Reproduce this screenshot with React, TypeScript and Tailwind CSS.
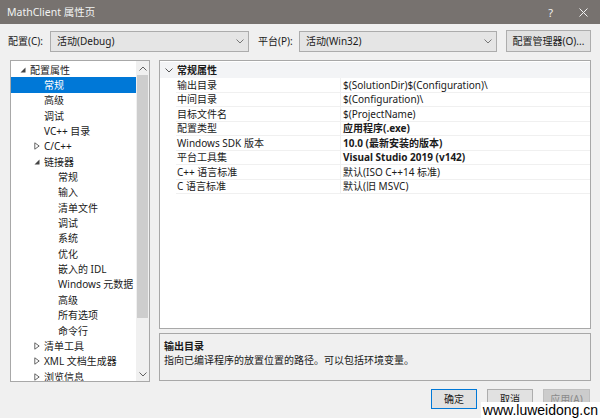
import React from 'react';

type Node = { label: string; level: number; arrow?: 'open' | 'closed'; selected?: boolean };

const tree: Node[] = [
  { label: '配置属性', level: 0, arrow: 'open' },
  { label: '常规', level: 1, selected: true },
  { label: '高级', level: 1 },
  { label: '调试', level: 1 },
  { label: 'VC++ 目录', level: 1 },
  { label: 'C/C++', level: 1, arrow: 'closed' },
  { label: '链接器', level: 1, arrow: 'open' },
  { label: '常规', level: 2 },
  { label: '输入', level: 2 },
  { label: '清单文件', level: 2 },
  { label: '调试', level: 2 },
  { label: '系统', level: 2 },
  { label: '优化', level: 2 },
  { label: '嵌入的 IDL', level: 2 },
  { label: 'Windows 元数据', level: 2 },
  { label: '高级', level: 2 },
  { label: '所有选项', level: 2 },
  { label: '命令行', level: 2 },
  { label: '清单工具', level: 1, arrow: 'closed' },
  { label: 'XML 文档生成器', level: 1, arrow: 'closed' },
  { label: '浏览信息', level: 1, arrow: 'closed' },
];

const props: { name: string; value: string; bold?: boolean }[] = [
  { name: '输出目录', value: '$(SolutionDir)$(Configuration)\\' },
  { name: '中间目录', value: '$(Configuration)\\' },
  { name: '目标文件名', value: '$(ProjectName)' },
  { name: '配置类型', value: '应用程序(.exe)', bold: true },
  { name: 'Windows SDK 版本', value: '10.0 (最新安装的版本)', bold: true },
  { name: '平台工具集', value: 'Visual Studio 2019 (v142)', bold: true },
  { name: 'C++ 语言标准', value: '默认(ISO C++14 标准)' },
  { name: 'C 语言标准', value: '默认(旧 MSVC)' },
];

// 树节点的小三角
function Arrow({ kind }: { kind: 'open' | 'closed' }) {
  if (kind === 'open')
    return (
      <svg width="6" height="6" viewBox="0 0 6 6">
        <polygon points="5.5,0.5 5.5,5.5 0.5,5.5" fill="#444" />
      </svg>
    );
  return (
    <svg width="6" height="8" viewBox="0 0 6 8">
      <polygon points="0.8,0.8 5.2,4 0.8,7.2" fill="none" stroke="#666" strokeWidth="1" />
    </svg>
  );
}

function Chevron({ up = false, color = '#777' }: { up?: boolean; color?: string }) {
  return (
    <svg width="8" height="5" viewBox="0 0 8 5">
      <polyline
        points={up ? '0.5,4.5 4,1 7.5,4.5' : '0.5,0.5 4,4 7.5,0.5'}
        fill="none"
        stroke={color}
        strokeWidth="1"
      />
    </svg>
  );
}

function Combo({ text, width }: { text: string; width: string }) {
  return (
    <div
      className={`${width} h-[21px] bg-[#e5e5e5] border border-[#acacac] flex items-center justify-between pl-[6px] pr-[4px]`}
    >
      <span>{text}</span>
      <Chevron />
    </div>
  );
}

export default function App() {
  return (
    <div
      className="w-[600px] h-[418px] bg-[#f0f0f0] relative overflow-hidden text-[10px] text-[#1a1a1a] leading-none"
      style={{ fontFamily: '"Noto Sans", "Noto Sans CJK SC", sans-serif' }}
    >
      {/* 标题栏 */}
      <div className="h-[24px] bg-[#77726f] flex items-center justify-between pl-[7px] pr-[12px] text-[#f2f2f2]">
        <span className="text-[10.5px]">MathClient 属性页</span>
        <div className="flex items-center gap-[26px]">
          <span className="text-[11px]">?</span>
          <svg width="9" height="9" viewBox="0 0 9 9">
            <path d="M0.5 0.5 L8.5 8.5 M8.5 0.5 L0.5 8.5" stroke="#f2f2f2" strokeWidth="1" />
          </svg>
        </div>
      </div>

      {/* 配置 / 平台 */}
      <div className="h-[34px] flex items-center pl-[8px]">
        <span className="w-[42px]">配置(C):</span>
        <Combo text="活动(Debug)" width="w-[199px]" />
        <span className="ml-[9px] w-[41px]">平台(P):</span>
        <Combo text="活动(Win32)" width="w-[198px]" />
        <div className="ml-[9px] w-[85px] h-[22px] bg-[#e1e1e1] border border-[#adadad] flex items-center justify-center">
          配置管理器(O)...
        </div>
      </div>

      {/* 主体 */}
      <div className="mt-[2px] flex pl-[10px] gap-[9px]">
        {/* 左侧树 */}
        <div className="w-[140px] h-[322px] bg-white border border-[#a8a8a8] flex">
          <div className="flex-1 pt-[1px] overflow-hidden">
            {tree.map((n, i) => (
              <div
                key={i}
                className={`h-[15.35px] flex items-center ${n.selected ? 'bg-[#0078d7] text-white' : ''}`}
              >
                <div
                  className="flex items-center justify-center w-[8px]"
                  style={{ marginLeft: 8 + n.level * 14 }}
                >
                  {n.arrow && <Arrow kind={n.arrow} />}
                </div>
                <span className="ml-[3px] whitespace-nowrap">{n.label}</span>
              </div>
            ))}
          </div>
          <div className="w-[13px] bg-[#f0f0f0] flex flex-col items-center">
            <div className="h-[14px] flex items-center justify-center">
              <Chevron up color="#606060" />
            </div>
            <div className="w-[11px] h-[243px] bg-[#cdcdcd]" />
            <div className="flex-1" />
            <div className="h-[14px] flex items-center justify-center">
              <Chevron color="#606060" />
            </div>
          </div>
        </div>

        {/* 右侧属性 */}
        <div className="w-[432px] flex flex-col gap-[4px]">
          <div className="h-[269px] bg-white border border-[#a8a8a8] pt-[1px]">
            <div className="h-[16px] bg-[#f3f4f6] flex items-center">
              <div className="w-[16px] flex justify-center pl-[2px]">
                <Chevron color="#555" />
              </div>
              <span className="ml-[1px] font-bold">常规属性</span>
            </div>
            {props.map((p, i) => (
              <div key={i} className="h-[14.5px] flex items-stretch">
                <div className="w-[16px]" />
                <div className="w-[165px] flex items-center border-b border-r border-[#f0f0f0] pl-[1px] whitespace-nowrap">
                  {p.name}
                </div>
                <div
                  className={`flex-1 flex items-center border-b border-[#f0f0f0] pl-[2px] whitespace-nowrap ${p.bold ? 'font-bold' : ''}`}
                >
                  {p.value}
                </div>
              </div>
            ))}
          </div>
          <div className="h-[48px] bg-[#f0f0f0] border border-[#a8a8a8] pl-[4px] pt-[7px] flex flex-col gap-[4px]">
            <span className="font-bold">输出目录</span>
            <span>指向已编译程序的放置位置的路径。可以包括环境变量。</span>
          </div>
        </div>
      </div>

      {/* 底部按钮 */}
      <div className="mt-[7px] flex justify-end gap-[10px] pr-[10px]">
        <div className="w-[46px] h-[20px] bg-[#e1e1e1] border border-[#0078d7] flex items-center justify-center">
          确定
        </div>
        <div className="w-[46px] h-[20px] bg-[#e1e1e1] border border-[#adadad] flex items-center justify-center">
          取消
        </div>
        <div className="w-[47px] h-[20px] bg-[#cccccc] border border-[#bfbfbf] flex items-center justify-center text-[#8a8a8a]">
          应用(A)
        </div>
      </div>

      {/* 水印 */}
      <div
        className="absolute right-0 bottom-0 bg-white pl-[2px] pr-[2px] h-[16px] flex items-center text-[14px] text-black"
        style={{ fontFamily: '"Liberation Sans", Arial, sans-serif' }}
      >
        www.luweidong.cn
      </div>
    </div>
  );
}
